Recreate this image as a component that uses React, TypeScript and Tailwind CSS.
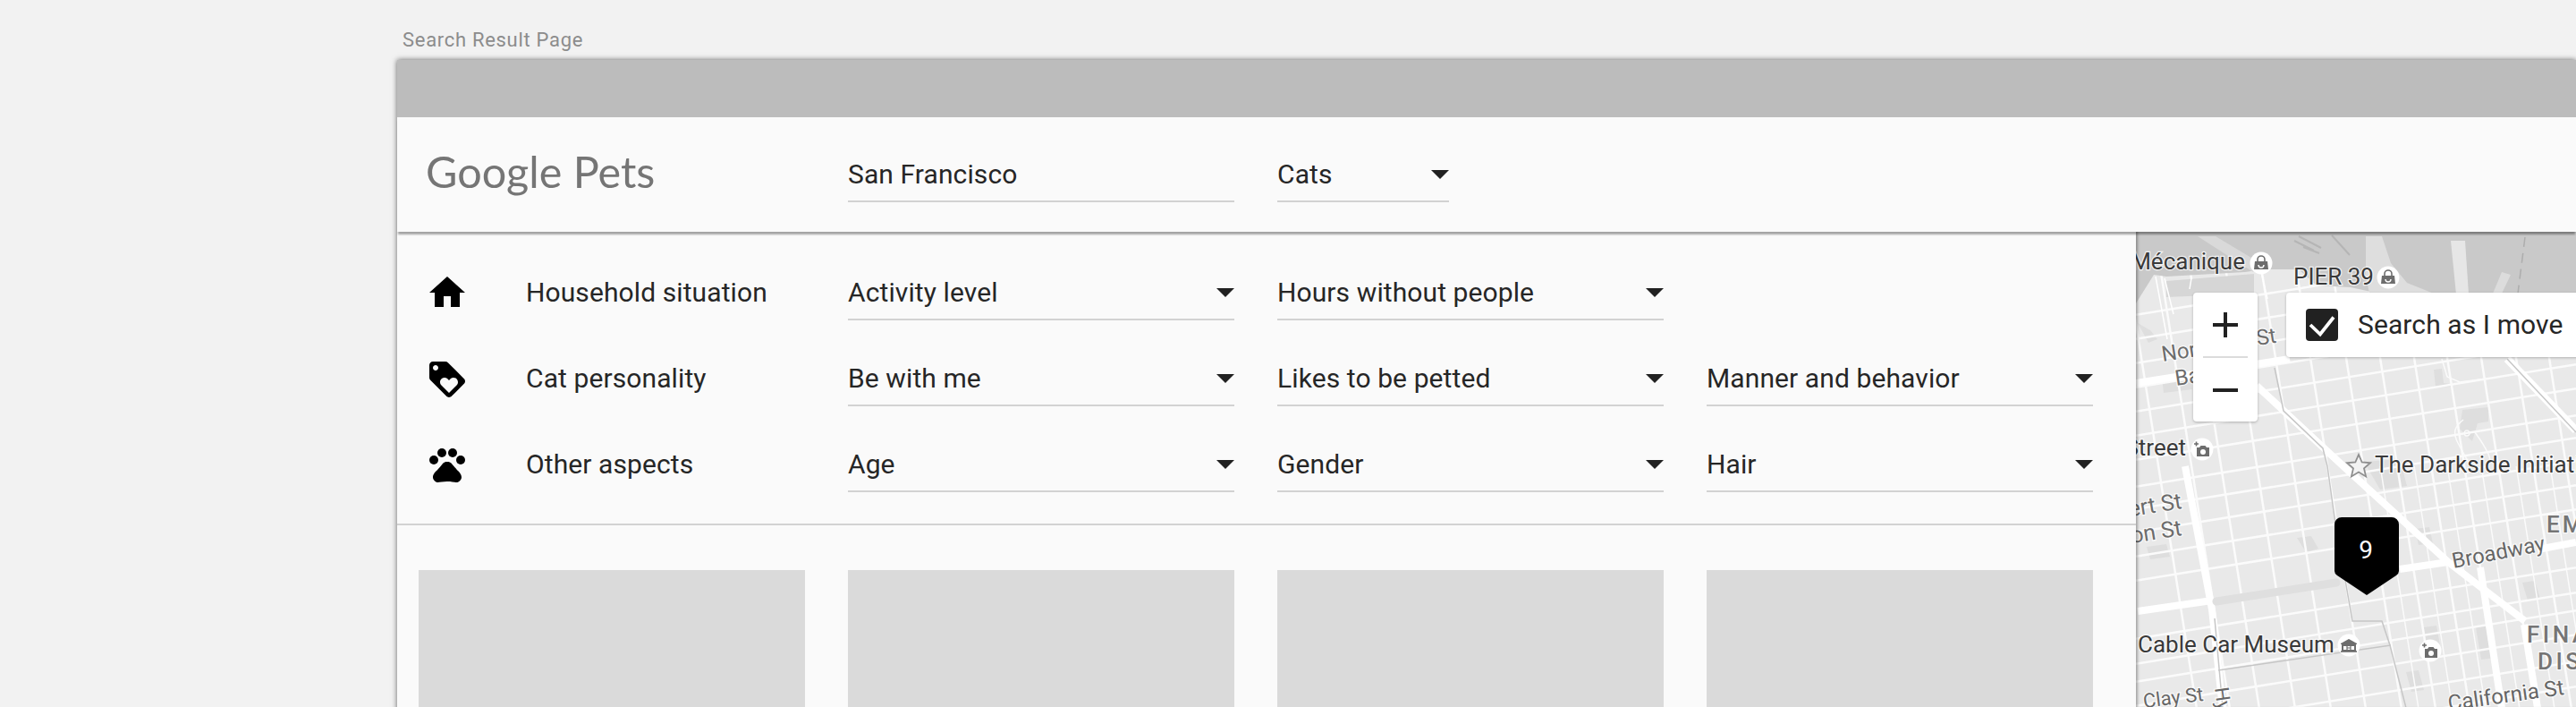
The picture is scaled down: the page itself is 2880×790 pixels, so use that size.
const ewRoads = [310, 337, 364, 391, 418, 445, 472, 502, 527, 553, 580, 607, 672, 700, 720, 747, 777, 805, 832];
const nsRoads = [2410, 2447, 2480, 2520, 2560, 2599, 2639, 2677, 2715, 2752, 2790, 2829, 2866];
const nsMinor = [2658, 2696, 2733, 2771, 2810, 2848];

const blocks = [
  'M2753 457l29-3v16l-12 2-6 20-14-14z',
  'M2721 412l9-1 2 16 8 1v3l-17 1z',
  'M2643 515l40-3 8 30-30 4z',
  'M2710 700l14-2 5 28-16 2z',
  'M2768 700l16-2 6 36-16 2z',
  'M2690 750l14-2 6 22-14 2z',
  'M2820 650l14-2 6 20-14 2z',
  'M2700 590l16-2 4 18-16 2z',
  'M2568 600l16-2 8 14-14 4z',
  'M2390 360l14 8 8 10-10 4z',
  'M2400 610l22-3 4 14-22 3z',
  'M2417 420l32-6 2 20-32 4z',
];

function MapLabel({ x, y, rotate = 0, size = 26, fill = '#3a3a3a', anchor = 'start', spacing = 0, weight = 400, children }: { x: number; y: number; rotate?: number; size?: number; fill?: string; anchor?: 'start' | 'end'; spacing?: number; weight?: number; children: string }) {
  return (
    <text
      x={x}
      y={y}
      fontSize={size}
      fontWeight={weight}
      fill={fill}
      letterSpacing={spacing}
      textAnchor={anchor}
      stroke="#ffffff"
      strokeWidth={2.5}
      strokeOpacity={0.75}
      paintOrder="stroke"
      transform={rotate ? `rotate(${rotate} ${x} ${y})` : undefined}
    >
      {children}
    </text>
  );
}

function Badge({ x, y, kind }: { x: number; y: number; kind: 'shop' | 'camera' | 'museum' }) {
  return (
    <g transform={`translate(${x} ${y})`}>
      <circle r={12.5} fill="#ffffff" />
      {kind === 'shop' && (
        <>
          <path d="M-7-2h14l1 9h-16z" fill="#6d6d6d" />
          <path d="M-4-2v-2a4 4 0 0 1 8 0v2" fill="none" stroke="#6d6d6d" strokeWidth={1.6} />
          <path d="M-3 2a3 3 0 0 0 6 0" fill="none" stroke="#ffffff" strokeWidth={1.4} />
        </>
      )}
      {kind === 'camera' && (
        <>
          <path d="M-6-2h3l1.500-2h5l1.500 2h3v10h-14z" fill="#6d6d6d" />
          <circle cx={1} cy={3} r={3} fill="#ffffff" />
          <path d="M-9-6h5M-6.500-8.500v5" stroke="#6d6d6d" strokeWidth={1.6} />
        </>
      )}
      {kind === 'museum' && (
        <>
          <path d="M0-7l9 5v1h-18v-1z" fill="#6d6d6d" />
          <path d="M-7 0h14v6h-14z" fill="none" stroke="#6d6d6d" strokeWidth={2} />
          <path d="M-2 1v4M2 1v4M-2 3h4" stroke="#6d6d6d" strokeWidth={1.2} />
          <path d="M-9 7h18" stroke="#6d6d6d" strokeWidth={1.6} />
        </>
      )}
    </g>
  );
}

function MapDrawing() {
  return (
    <svg viewBox="2388 258 492 532" width={492} height={532} className="block font-['Roboto',sans-serif]">
      <rect x={2388} y={258} width={492} height={532} fill="#e9e9e9" />
      {blocks.map((d) => (
        <path key={d} d={d} fill="#dedede" />
      ))}
      <g stroke="#fbfbfb" strokeWidth={2.5} fill="none">
        {ewRoads.map((y) => (
          <line key={y} x1={2388} y1={y + 252 * 0.162} x2={2880} y2={y - 240 * 0.162} />
        ))}
        {nsRoads.map((x) => (
          <line key={x} x1={x - 240 * 0.158} y1={260} x2={x + 290 * 0.158} y2={790} />
        ))}
      </g>
      <g stroke="#fbfbfb" strokeWidth={1.5} fill="none">
        {nsMinor.map((x) => (
          <line key={x} x1={x + 20 * 0.158} y1={520} x2={x + 290 * 0.158} y2={790} />
        ))}
        <path d="M2730 400l6 20 14 6 30-4" />
        <path d="M2754 468c-10 8-12 14-6 26l12 22c4 6 16 8 22 2 5-6-2-16-8-26l-7-10" />
        <path d="M2758 480a3 3 0 1 0 .01 0" />
      </g>

      {/* main roads */}
      <g stroke="#ffffff" strokeWidth={8} fill="none">
        <path d="M2388 427L2560 400" />
        <path d="M2523 430L2620 520L2737 627L2823 693" />
        <path d="M2803 400L2880 480" strokeWidth={9} />
        <path d="M2443 520L2473 680L2485 790" />
        <path d="M2390 682L2473 670" />
        <path d="M2683 635L2737 627" />
        <path d="M2837 613L2880 605" />
        <path d="M2773 633L2797 790" />
        <path d="M2822 697L2837 790" />
      </g>
      <path d="M2478 671L2612 650" stroke="#dfdfdf" strokeWidth={9} strokeLinecap="round" fill="none" />

      {/* cable car lines */}
      <g stroke="#c6c6c6" strokeWidth={1.5} fill="none">
        <path d="M2543 410L2553 458L2597 500L2602 520L2610 577L2623 653L2630 693L2663 693L2672 720L2690 790" />
        <path d="M2480 748L2673 720" />
        <path d="M2476 690L2485 790" />
        <path d="M2803 400L2880 482" />
      </g>

      {/* bay and piers */}
      <path
        d="M2388 258H2880V327H2660L2628 320L2590 318L2570 300L2530 300L2510 303L2422 308L2408 306L2388 338Z"
        fill="#c9c9c9"
      />
      <path d="M2645 263h18l10 30 18 22 30 12h-72l-4-20z" fill="#dedede" />
      <path d="M2457 263l20 0 50 30-8 10z" fill="#d9d9d9" />
      <path d="M2740 268h16l4 60h-14z" fill="#e6e6e6" />
      <path d="M2797 303l10 3-10 21h-10z" fill="#dcdcdc" />
      <path d="M2823 264l-8 63" stroke="#adadad" strokeWidth={1.5} strokeDasharray="11 7" fill="none" />
      <path d="M2422 313l98-8v22l-98 4z" fill="#d6d6d6" />
      <path d="M2570 263l25 13M2565 268l22 11M2575 275l18 7M2607 262l20 22" stroke="#b5b5b5" strokeWidth={2} fill="none" />
      <path d="M2410 308l13 70M2420 310l10 40M2528 303l7 30M2450 310l-2 12" stroke="#ffffff" strokeWidth={1.5} fill="none" />

      <MapLabel x={2510} y={300} anchor="end">Mécanique</MapLabel>
      <Badge x={2528} y={293} kind="shop" />
      <MapLabel x={2564} y={317}>PIER 39</MapLabel>
      <Badge x={2670} y={309} kind="shop" />
      <MapLabel x={2418} y={403} size={24} rotate={-9} fill="#6c6c6c">Nort</MapLabel>
      <MapLabel x={2433} y={430} size={24} rotate={-9} fill="#6c6c6c">Ba</MapLabel>
      <MapLabel x={2524} y={385} size={24} rotate={-9} fill="#6c6c6c">St</MapLabel>
      <MapLabel x={2444} y={508} anchor="end">Street</MapLabel>
      <Badge x={2462} y={501} kind="camera" />
      <path
        d="M2637 507l3.7 8.5 9.3.8-7 6.1 2.1 9-8.100-4.800-8.100 4.800 2.100-9-7-6.100 9.300-.8z"
        fill="#f2f2f2"
        stroke="#8e8e8e"
        strokeWidth={1.8}
      />
      <MapLabel x={2655} y={527}>The Darkside Initiative</MapLabel>
      <MapLabel x={2847} y={594} fill="#757575" weight={500} spacing={3}>EMBARCADERO</MapLabel>
      <MapLabel x={2440} y={567} size={25} rotate={-9} fill="#6c6c6c" anchor="end">Gilbert St</MapLabel>
      <MapLabel x={2440} y={597} size={25} rotate={-9} fill="#6c6c6c" anchor="end">Union St</MapLabel>
      <MapLabel x={2743} y={634} size={24} rotate={-11} fill="#666666">Broadway</MapLabel>
      <MapLabel x={2390} y={728}>Cable Car Museum</MapLabel>
      <Badge x={2626} y={720} kind="museum" />
      <Badge x={2717} y={726} kind="camera" />
      <MapLabel x={2825} y={717} fill="#757575" weight={500} spacing={3.5}>FINANCIAL</MapLabel>
      <MapLabel x={2837} y={747} fill="#757575" weight={500} spacing={3.5}>DISTRICT</MapLabel>
      <MapLabel x={2738} y={793} size={24} rotate={-8} fill="#666666">California St</MapLabel>
      <MapLabel x={2397} y={790} size={22} rotate={-7} fill="#666666">Clay St</MapLabel>
      <MapLabel x={2476} y={768} size={22} rotate={82} fill="#666666">Hyde</MapLabel>

      {/* result marker */}
      <path d="M2618 577h56a8 8 0 0 1 8 8v52a6 6 0 0 1-3 5l-33 22-33-22a6 6 0 0 1-3-5v-52a8 8 0 0 1 8-8z" fill="#000000" />
      <text x={2645} y={623} fontSize={28} fill="#ffffff" textAnchor="middle">9</text>
    </svg>
  );
}

function Arrow() {
  return <span className="h-0 w-0 border-x-[10px] border-t-[10px] border-x-transparent border-t-[#212121]" />;
}

function Field({ label, arrow = true }: { label?: string; arrow?: boolean }) {
  if (!label) return <div />;
  return (
    <div className="flex h-[62px] items-center justify-between border-b-2 border-[#d2d2d2] pt-[2px]">
      <span className="text-[30px] leading-10 tracking-[0.1px] text-[#262626]">{label}</span>
      {arrow && <Arrow />}
    </div>
  );
}

const filterRows = [
  {
    label: 'Household situation',
    icon: <path d="M10 20v-6h4v6h5v-8h3L12 3 2 12h3v8z" />,
    fields: ['Activity level', 'Hours without people', ''],
    iconClass: '',
  },
  {
    label: 'Cat personality',
    icon: (
      <path d="M21.41 11.58l-9-9C12.05 2.22 11.55 2 11 2H4c-1.1 0-2 .9-2 2v7c0 .55.22 1.05.59 1.42l9 9c.36.36.86.58 1.41.58s1.05-.22 1.41-.59l7-7c.37-.36.59-.86.59-1.41s-.23-1.06-.59-1.42zM5.5 7C4.67 7 4 6.33 4 5.5S4.67 4 5.5 4 7 4.67 7 5.5 6.33 7 5.5 7zm11.77 8.27L13 19.54l-4.27-4.27C8.28 14.81 8 14.19 8 13.5c0-1.38 1.12-2.5 2.5-2.5.69 0 1.32.28 1.77.74l.73.72.73-.73c.45-.45 1.08-.73 1.77-.73 1.38 0 2.5 1.12 2.5 2.5 0 .69-.28 1.32-.73 1.77z" />
    ),
    fields: ['Be with me', 'Likes to be petted', 'Manner and behavior'],
    iconClass: 'mt-[2px]',
  },
  {
    label: 'Other aspects',
    icon: (
      <>
        <circle cx="4.5" cy="9.5" r="2.5" />
        <circle cx="9" cy="5.5" r="2.5" />
        <circle cx="15" cy="5.5" r="2.5" />
        <circle cx="19.5" cy="9.5" r="2.5" />
        <path d="M17.34 14.86c-.87-1.02-1.6-1.89-2.48-2.91-.46-.54-1.05-1.08-1.75-1.32-.11-.04-.22-.07-.33-.09-.25-.04-.52-.04-.78-.04s-.53 0-.79.05c-.11.02-.22.05-.33.09-.7.24-1.28.78-1.75 1.32-.87 1.02-1.6 1.89-2.48 2.91-1.31 1.31-2.92 2.76-2.62 4.79.29 1.02 1.02 2.03 2.33 2.32.73.15 3.06-.44 5.54-.44h.18c2.48 0 4.81.58 5.54.44 1.31-.29 2.04-1.31 2.33-2.32.31-2.04-1.3-3.49-2.61-4.8z" />
      </>
    ),
    fields: ['Age', 'Gender', 'Hair'],
    iconClass: '',
  },
];

export default function App() {
  return (
    <div className="h-[790px] w-[2880px] overflow-hidden bg-[#f2f2f2] pl-[444px] font-['Roboto',sans-serif]">
      <div className="flex h-[67px] items-end pb-2 pl-[6px] text-[22px] leading-7 tracking-[0.7px] text-[#8c8c8c]">Search Result Page</div>
      <div className="h-[800px] bg-[#fafafa] shadow-[0_0_6px_rgba(0,0,0,0.6)]">
        <div className="h-16 bg-[#bcbcbc]" />
        <header className="relative z-10 grid h-32 grid-cols-[432px_432px_192px] items-end gap-12 bg-[#fafafa] pb-[33px] pl-6 shadow-[0_4px_2px_-1px_rgba(0,0,0,0.35)]">
          <div className="pb-1 pl-2 font-['Lato',sans-serif] text-[48.5px] leading-[62px] text-[#757575]">Google Pets</div>
          <Field label="San Francisco" arrow={false} />
          <Field label="Cats" />
        </header>
        <div className="flex">
          <div className="w-[1944px] shrink-0">
            <div className="border-b-2 border-[#d2d2d2] pb-[35px] pl-6 pr-12 pt-[3px]">
              {filterRows.map((row) => (
                <div key={row.label} className="grid h-24 grid-cols-4 items-end gap-12">
                  <div className="flex h-[62px] items-center">
                    <svg viewBox="0 0 24 24" width={48} height={48} className={`ml-2 shrink-0 ${row.iconClass}`} fill="#000000">
                      {row.icon}
                    </svg>
                    <span className="ml-[64px] text-[30px] leading-10 tracking-[0.1px] text-[#262626]">{row.label}</span>
                  </div>
                  {row.fields.map((f, i) => (
                    <Field key={i} label={f} />
                  ))}
                </div>
              ))}
            </div>
            <div className="grid grid-cols-4 gap-12 pl-6 pr-12 pt-[50px]">
              {[0, 1, 2, 3].map((i) => (
                <div key={i} className="h-[400px] bg-[#dadada]" />
              ))}
            </div>
          </div>
          <div className="relative h-[532px] w-[492px] shrink-0 overflow-hidden">
            <MapDrawing />
            <div className="absolute inset-0 shadow-[inset_3px_0_3px_-1px_rgba(0,0,0,0.3)]" />
            <div className="absolute left-16 top-[68px] flex h-36 w-[72px] flex-col items-center rounded-[4px] bg-white shadow-[0_1px_3px_rgba(0,0,0,0.25)]">
              <div className="flex h-[71px] items-center justify-center">
                <svg viewBox="0 0 28 28" width={28} height={28}>
                  <path d="M14 0v28M0 14h28" stroke="#212121" strokeWidth={4} />
                </svg>
              </div>
              <div className="h-[2px] w-[50px] bg-[#dcdcdc]" />
              <div className="flex h-[71px] items-center justify-center">
                <svg viewBox="0 0 28 28" width={28} height={28}>
                  <path d="M0 14h28" stroke="#212121" strokeWidth={4} />
                </svg>
              </div>
            </div>
            <div className="absolute left-[168px] top-[68px] flex h-[72px] w-[420px] items-center rounded-l-[4px] bg-white pl-[22px] shadow-[0_1px_3px_rgba(0,0,0,0.25)]">
              <span className="flex h-9 w-9 items-center justify-center rounded-[4px] bg-[#212121]">
                <svg viewBox="0 0 36 36" width={36} height={36}>
                  <path d="M5 18l11 10.500L31 9.500" fill="none" stroke="#ffffff" strokeWidth={3.8} />
                </svg>
              </span>
              <span className="ml-[22px] text-[30px] leading-10 tracking-[0.1px] text-[#262626]">Search as I move</span>
            </div>
          </div>
        </div>
      </div>
    </div>
  );
}
